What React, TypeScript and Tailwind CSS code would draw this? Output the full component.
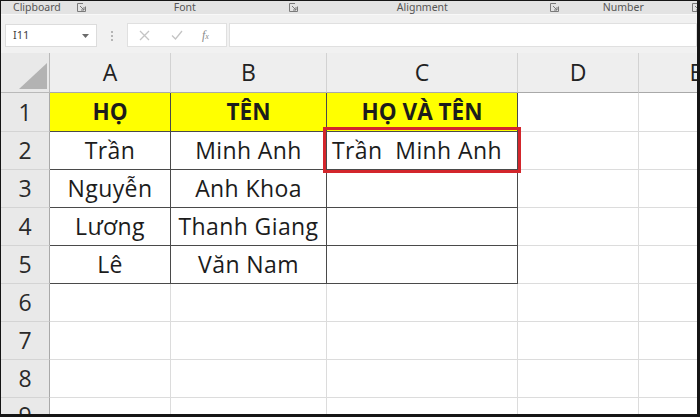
import React from "react";

const FONT = '"Open Sans", "Noto Sans", "DejaVu Sans", sans-serif';

function Launcher() {
  return (
    <svg width="9" height="9" viewBox="0 0 9 9" className="shrink-0">
      <path d="M0.5 0.5 H6 M0.5 0.5 V8.5 H8.5 V3.5" stroke="#7a7a7a" strokeWidth="1" fill="none" />
      <path d="M3 3 L7 7 M7 4 V7 H4" stroke="#7a7a7a" strokeWidth="1" fill="none" />
    </svg>
  );
}

const cols = ["A", "B", "C", "D", "E"];

type Cell = { text?: string; bold?: boolean; yellow?: boolean; table?: boolean; left?: boolean; red?: boolean };

const data: Cell[][] = [
  [
    { text: "HỌ", bold: true, yellow: true, table: true },
    { text: "TÊN", bold: true, yellow: true, table: true },
    { text: "HỌ VÀ TÊN", bold: true, yellow: true, table: true },
    {},
    {},
  ],
  [
    { text: "Trần", table: true },
    { text: "Minh Anh", table: true },
    { text: "Trần  Minh Anh", table: true, left: true, red: true },
    {},
    {},
  ],
  [{ text: "Nguyễn", table: true }, { text: "Anh Khoa", table: true }, { table: true }, {}, {}],
  [{ text: "Lương", table: true }, { text: "Thanh Giang", table: true }, { table: true }, {}, {}],
  [{ text: "Lê", table: true }, { text: "Văn Nam", table: true }, { table: true }, {}, {}],
  [{}, {}, {}, {}, {}],
  [{}, {}, {}, {}, {}],
  [{}, {}, {}, {}, {}],
  [{}, {}, {}, {}, {}],
];

export default function App() {
  return (
    <div
      className="w-[700px] h-[417px] bg-white border-t border-l border-r-[3px] border-b-[3px] border-[#151515] overflow-hidden flex flex-col"
      style={{ fontFamily: FONT }}
    >
      {/* Ribbon group labels */}
      <div className="h-[13px] shrink-0 bg-[#e3e3e3] flex items-center text-[10.5px] leading-none text-[#555]" style={{ fontFamily: '"Noto Sans", sans-serif' }}>
        <div className="w-[88px] flex items-center pl-[12px]">
          <span>Clipboard</span>
          <span className="ml-[16px]"><Launcher /></span>
        </div>
        <div className="w-[212px] flex items-center">
          <span className="ml-[88px]">Font</span>
          <span className="ml-[93px]"><Launcher /></span>
        </div>
        <div className="w-[258px] flex items-center">
          <span className="ml-[99px]">Alignment</span>
          <span className="ml-[102px]"><Launcher /></span>
        </div>
        <div className="flex-1 flex items-center">
          <span className="ml-[47px]">Number</span>
          <span className="ml-[48px]"><Launcher /></span>
        </div>
      </div>

      {/* Formula bar area */}
      <div className="h-[39px] shrink-0 bg-[#f1f1f1] border-t border-[#f8f8f8] flex items-start pt-[9px]">
        <div className="ml-[4px] w-[92px] h-[23px] bg-white border border-[#dcdcdc] flex items-center justify-between px-[7px]">
          <span className="text-[11px] text-[#3f3f3f]" style={{ fontFamily: '"Noto Sans", sans-serif' }}>I11</span>
          <svg width="7" height="4" viewBox="0 0 7 4"><path d="M0 0 H7 L3.5 4 Z" fill="#6b6b6b" /></svg>
        </div>
        <div className="w-[30px] h-[23px] flex flex-col items-center justify-center gap-[2px]">
          <span className="w-[2px] h-[2px] bg-[#b5b5b5]" />
          <span className="w-[2px] h-[2px] bg-[#b5b5b5]" />
          <span className="w-[2px] h-[2px] bg-[#b5b5b5]" />
        </div>
        <div className="w-[100px] h-[24px] -mt-[1px] bg-white border border-[#e0e0e0] flex items-center">
          <svg width="11" height="11" viewBox="0 0 11 11" className="ml-[11px]">
            <path d="M1 1 L10 10 M10 1 L1 10" stroke="#c4c4c4" strokeWidth="1.3" />
          </svg>
          <svg width="12" height="10" viewBox="0 0 12 10" className="ml-[21px]">
            <path d="M1 5.5 L4.5 9 L11 1" stroke="#c4c4c4" strokeWidth="1.3" fill="none" />
          </svg>
          <span className="ml-[19px] text-[12px] italic text-[#8a8a8a] leading-none" style={{ fontFamily: '"Liberation Serif", serif' }}>
            f<span className="text-[8px]">x</span>
          </span>
        </div>
        <div className="ml-[2px] flex-1 h-[24px] -mt-[1px] bg-white border border-[#e0e0e0]" />
      </div>

      {/* Grid */}
      <div className="flex-1 overflow-hidden">
        <div className="grid grid-cols-[49px_121px_156px_191px_121px_58px] grid-rows-[40px_39px_38px_38px_38px_38px_38px_38px_38px]">
          {/* corner */}
          <div className="bg-[#e9e9e9] border-r border-b border-[#b9b9b9] relative">
            <svg width="49" height="40" viewBox="0 0 49 40" className="absolute inset-0">
              <polygon points="18,36 46,10 46,36" fill="#b3b3b3" />
            </svg>
          </div>
          {cols.map((c, i) => (
            <div
              key={c}
              className={`bg-[#eeeeee] border-b border-[#a9a9a9] flex items-center justify-center text-[23px] text-[#222] ${i < 4 ? "border-r border-r-[#d2d2d2]" : ""}`}
            >
              <span className={i === 4 ? "ml-[56px]" : ""}>{c}</span>
            </div>
          ))}

          {data.map((row, r) => (
            <React.Fragment key={r}>
              <div className="bg-[#e9e9e9] border-r border-r-[#a9a9a9] border-b border-b-[#d4d4d4] flex items-center justify-center text-[23px] text-[#2a2a2a]">
                {r + 1}
              </div>
              {row.map((cell, ci) => {
                const dark = cell.table;
                const cls = [
                  "relative flex items-center whitespace-pre text-[#1c1c1c]",
                  cell.left ? "justify-start pl-[5px]" : "justify-center",
                  cell.bold ? "font-bold text-[22.5px]" : "text-[23px]",
                  cell.yellow ? "bg-[#ffff00]" : "bg-white",
                  dark ? "border-r border-b border-[#4a4a4a]" : "border-r border-b border-[#dcdcdc]",
                  ci === 4 ? "border-r-0" : "",
                ].join(" ");
                return (
                  <div key={ci} className={cls}>
                    <span className={cell.bold ? "" : "tracking-[0.4px]"}>{cell.text}</span>
                    {cell.red && (
                      <div className="absolute z-10 -left-[4px] -top-[5px] -right-[4px] -bottom-[4px] border-[3px] border-[#d3262c]" />
                    )}
                  </div>
                );
              })}
            </React.Fragment>
          ))}
        </div>
      </div>
    </div>
  );
}
